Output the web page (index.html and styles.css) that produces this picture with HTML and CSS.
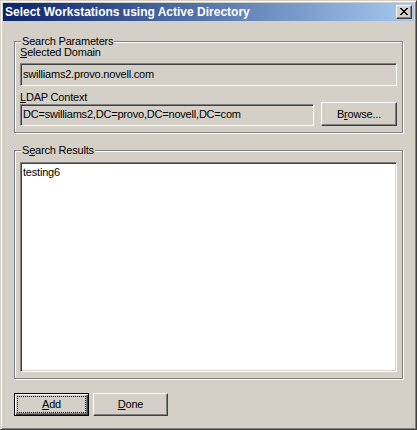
FILE: index.html
```html
<!DOCTYPE html>
<html>
<head>
<meta charset="utf-8">
<title>Select Workstations using Active Directory</title>
<link rel="stylesheet" href="styles.css">
</head>
<body>
<div class="window">
  <div class="titlebar">
    <span class="title">Select Workstations using Active Directory</span>
    <div class="close-btn">
      <svg width="8" height="7" viewBox="0 0 8 7" shape-rendering="crispEdges"><path d="M0 0h2v1H0z M6 0h2v1H6z M1 1h2v1H1z M5 1h2v1H5z M2 2h4v1H2z M3 3h2v1H3z M2 4h4v1H2z M1 5h2v1H1z M5 5h2v1H5z M0 6h2v1H0z M6 6h2v1H6z" fill="#000"/></svg>
    </div>
  </div>
  <div class="content">
    <div class="group group-params">
      <span class="legend">Search Parameters</span>
      <div class="label"><u>S</u>elected Domain</div>
      <div class="field field-domain">swilliams2.provo.novell.com</div>
      <div class="ldap-row">
        <div class="ldap-col">
          <div class="label"><u>L</u>DAP Context</div>
          <div class="field field-ldap">DC=swilliams2,DC=provo,DC=novell,DC=com</div>
        </div>
        <div class="button browse">B<u>r</u>owse...</div>
      </div>
    </div>
    <div class="group group-results">
      <span class="legend">S<u>e</u>arch Results</span>
      <div class="listbox">
        <div class="list-item">testing6</div>
      </div>
    </div>
    <div class="buttons">
      <div class="button default"><span class="focus"><u>A</u>dd</span></div>
      <div class="button"><u>D</u>one</div>
    </div>
  </div>
</div>
</body>
</html>
```

FILE: styles.css
```css
html, body {
  margin: 0;
  padding: 0;
  background: #d4d0c8;
}

.window {
  width: 417px;
  height: 430px;
  box-sizing: border-box;
  background: #d4d0c8;
  border: 1px solid;
  border-color: #d4d0c8 #404040 #404040 #d4d0c8;
  box-shadow: inset 1px 1px 0 #fff, inset -1px -1px 0 #808080;
  padding: 2px;
  display: flex;
  flex-direction: column;
  font-family: "Liberation Sans", Arial, sans-serif;
  font-size: 11px;
  letter-spacing: -0.2px;
  color: #000;
}

.titlebar {
  height: 18px;
  flex: none;
  display: flex;
  align-items: flex-start;
  padding: 0 2px;
  background: linear-gradient(to right, #0a246a, #a6caf0);
}

.title {
  color: #fff;
  font-weight: bold;
  font-size: 12px;
  letter-spacing: 0;
  line-height: 18px;
  white-space: nowrap;
}

.close-btn {
  margin-left: auto;
  margin-top: 2px;
  width: 16px;
  height: 14px;
  box-sizing: border-box;
  background: #d4d0c8;
  border: 1px solid;
  border-color: #fff #404040 #404040 #fff;
  box-shadow: inset -1px -1px 0 #808080;
  display: flex;
  padding: 2px 0 0 3px;
}

.close-btn svg {
  display: block;
}

.content {
  flex: 1;
  padding: 20px 11px 0;
  display: flex;
  flex-direction: column;
}

.group {
  position: relative;
  border: 1px solid #808080;
  box-shadow: 1px 1px 0 #fff, inset 1px 1px 0 #fff;
  display: flex;
  flex-direction: column;
}

.group-params {
  padding: 4px 5px 6px;
}

.group-results {
  margin-top: 17px;
  padding: 11px 5px 6px;
}

.legend {
  position: absolute;
  top: -7px;
  left: 6px;
  padding: 0 1px;
  background: #d4d0c8;
  line-height: 13px;
  white-space: nowrap;
}

.label {
  line-height: 13px;
  white-space: nowrap;
}

.field {
  box-sizing: border-box;
  border: 1px solid;
  border-color: #808080 #fff #fff #808080;
  box-shadow: inset 1px 1px 0 #404040, inset -1px -1px 0 #d4d0c8;
  background: #d4d0c8;
  padding: 0 2px;
  white-space: nowrap;
  overflow: hidden;
}

.field-domain {
  margin-top: 4px;
  height: 23px;
  line-height: 21px;
}

.ldap-row {
  margin-top: 5px;
  display: flex;
  align-items: flex-end;
  gap: 7px;
}

.ldap-col {
  width: 294px;
  display: flex;
  flex-direction: column;
}

.field-ldap {
  height: 22px;
  line-height: 19px;
}

.button {
  box-sizing: border-box;
  width: 75px;
  height: 23px;
  background: #d4d0c8;
  border: 1px solid;
  border-color: #fff #404040 #404040 #fff;
  box-shadow: inset -1px -1px 0 #808080;
  display: flex;
  align-items: center;
  justify-content: center;
  line-height: 13px;
  white-space: nowrap;
}

.browse {
  width: 76px;
  height: 24px;
  padding-top: 1px;
}

.listbox {
  height: 210px;
  box-sizing: border-box;
  border: 1px solid;
  border-color: #808080 #fff #fff #808080;
  box-shadow: inset 1px 1px 0 #404040, inset -1px -1px 0 #d4d0c8;
  background: #fff;
  padding: 2px;
}

.list-item {
  line-height: 13px;
  padding: 1px 0 0 0;
}

.buttons {
  margin-top: 14px;
  display: flex;
  gap: 4px;
}

.button.default {
  border: 1px solid #000;
  box-shadow: inset 1px 1px 0 #fff, inset -1px -1px 0 #404040, inset -2px -2px 0 #808080;
  padding: 3px 3px 3px 3px;
}

.focus {
  flex: 1;
  align-self: stretch;
  display: flex;
  align-items: center;
  justify-content: center;
  outline: 1px dotted #000;
  outline-offset: 0;
}

u {
  text-decoration: underline;
  text-underline-offset: 1px;
}
```
